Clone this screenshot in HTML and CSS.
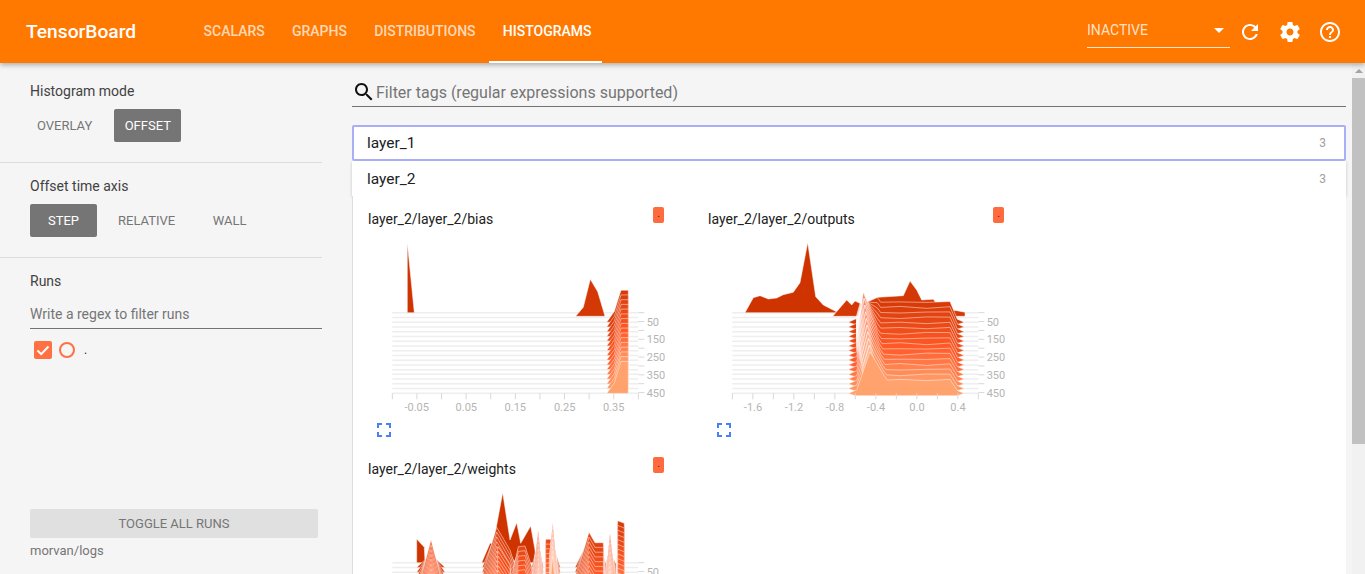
FILE: index.html
```html
<!DOCTYPE html>
<html lang="en">

<head>
    <meta charset="UTF-8">
    <meta name="viewport" content="width=device-width, initial-scale=1.0">
    <title>TensorBoard</title>
    <link rel="stylesheet" href="styles.css">
</head>

<body>
    <header class="topbar">
        <div class="brand">TensorBoard</div>
        <nav class="tabs">
            <a class="tab">Scalars</a>
            <a class="tab">Graphs</a>
            <a class="tab">Distributions</a>
            <a class="tab active">Histograms</a>
        </nav>
        <div class="run-select">
            <span>INACTIVE</span>
            <i class="caret"></i>
        </div>
        <div class="top-icons">
            <svg class="top-icon" viewBox="0 0 24 24"><path d="M17.65 6.35C16.2 4.9 14.21 4 12 4c-4.42 0-7.99 3.58-7.99 8s3.57 8 7.99 8c3.73 0 6.84-2.55 7.73-6h-2.08c-.82 2.33-3.04 4-5.65 4-3.31 0-6-2.69-6-6s2.69-6 6-6c1.66 0 3.14.69 4.22 1.78L13 11h7V4l-2.35 2.35z"/></svg>
            <svg class="top-icon" viewBox="0 0 24 24"><path d="M19.43 12.98c.04-.32.07-.64.07-.98s-.03-.66-.07-.98l2.11-1.65c.19-.15.24-.42.12-.64l-2-3.46c-.12-.22-.39-.3-.61-.22l-2.49 1c-.52-.4-1.08-.73-1.69-.98l-.38-2.65C14.46 2.18 14.25 2 14 2h-4c-.25 0-.46.18-.49.42l-.38 2.65c-.61.25-1.17.59-1.69.98l-2.49-1c-.23-.09-.49 0-.61.22l-2 3.46c-.13.22-.07.49.12.64l2.11 1.65c-.04.32-.07.65-.07.98s.03.66.07.98l-2.11 1.65c-.19.15-.24.42-.12.64l2 3.46c.12.22.39.3.61.22l2.49-1c.52.4 1.08.73 1.69.98l.38 2.65c.03.24.24.42.49.42h4c.25 0 .46-.18.49-.42l.38-2.65c.61-.25 1.17-.59 1.69-.98l2.49 1c.23.09.49 0 .61-.22l2-3.46c.12-.22.07-.49-.12-.64l-2.11-1.65zM12 15.5c-1.93 0-3.5-1.57-3.5-3.5s1.57-3.5 3.5-3.5 3.5 1.57 3.5 3.5-1.57 3.5-3.5 3.5z"/></svg>
            <svg class="top-icon" viewBox="0 0 24 24"><path d="M11 18h2v-2h-2v2zm1-16C6.48 2 2 6.48 2 12s4.48 10 10 10 10-4.48 10-10S17.52 2 12 2zm0 18c-4.41 0-8-3.59-8-8s3.59-8 8-8 8 3.59 8 8-3.59 8-8 8zm0-14c-2.21 0-4 1.79-4 4h2c0-1.1.9-2 2-2s2 .9 2 2c0 2-3 1.75-3 5h2c0-2.25 3-2.5 3-5 0-2.21-1.79-4-4-4z"/></svg>
        </div>
    </header>

    <div class="page">
        <aside class="sidebar">
            <section class="side-section mode">
                <h3 class="side-title">Histogram mode</h3>
                <div class="btn-row">
                    <button class="opt">OVERLAY</button>
                    <button class="opt on">OFFSET</button>
                </div>
            </section>
            <section class="side-section axis">
                <h3 class="side-title">Offset time axis</h3>
                <div class="btn-row">
                    <button class="opt on">STEP</button>
                    <button class="opt">RELATIVE</button>
                    <button class="opt">WALL</button>
                </div>
            </section>
            <section class="runs">
                <h3 class="side-title">Runs</h3>
                <div class="regex">Write a regex to filter runs</div>
                <div class="run-row">
                    <span class="check">
                        <svg viewBox="0 0 18 18"><path d="M3.5 9.5l3.7 3.6 7.3-7.6" /></svg>
                    </span>
                    <span class="radio"></span>
                    <span class="run-name">.</span>
                </div>
            </section>
            <div class="side-foot">
                <button class="toggle">TOGGLE ALL RUNS</button>
                <div class="logdir">morvan/logs</div>
            </div>
        </aside>

        <main class="content">
            <div class="filter">
                <svg class="search" viewBox="0 0 24 24"><path d="M15.5 14h-.79l-.28-.27C15.41 12.59 16 11.11 16 9.5 16 5.91 13.09 3 9.5 3S3 5.91 3 9.5 5.91 16 9.5 16c1.61 0 3.09-.59 4.23-1.57l.27.28v.79l5 4.99L20.49 19l-4.99-5zm-6 0C7.01 14 5 11.99 5 9.5S7.01 5 9.5 5 14 7.01 14 9.5 11.99 14 9.5 14z"/></svg>
                <span>Filter tags (regular expressions supported)</span>
            </div>
            <div class="category focused"><span>layer_1</span><span class="count">3</span></div>
            <div class="category"><span>layer_2</span><span class="count">3</span></div>
            <div class="cards">
                <div class="card">
                    <div class="card-head"><span class="card-title">layer_2/layer_2/bias</span><span class="pin">.</span></div>
                    <svg class="hist" id="bias"></svg>
                    <svg class="expand" viewBox="0 0 24 24"><path d="M7 14H5v5h5v-2H7v-3zm-2-4h2V7h3V5H5v5zm12 7h-3v2h5v-5h-2v3zM14 5v2h3v3h2V5h-5z"/></svg>
                </div>
                <div class="card">
                    <div class="card-head"><span class="card-title">layer_2/layer_2/outputs</span><span class="pin">.</span></div>
                    <svg class="hist" id="outputs"></svg>
                    <svg class="expand" viewBox="0 0 24 24"><path d="M7 14H5v5h5v-2H7v-3zm-2-4h2V7h3V5H5v5zm12 7h-3v2h5v-5h-2v3zM14 5v2h3v3h2V5h-5z"/></svg>
                </div>
                <div class="card">
                    <div class="card-head"><span class="card-title">layer_2/layer_2/weights</span><span class="pin">.</span></div>
                    <svg class="hist" id="weights"></svg>
                </div>
            </div>
        </main>

        <div class="scrollbar">
            <i class="scroll-up"></i>
            <div class="scroll-thumb"></div>
        </div>
    </div>

    <script src="chart.js"></script>
</body>

</html>
```

FILE: styles.css
```css
* {
    box-sizing: border-box;
}

html,
body {
    margin: 0;
    height: 100%;
    overflow: hidden;
}

body {
    display: flex;
    flex-direction: column;
    background-color: #f5f5f5;
    font-family: Roboto, "Liberation Sans", sans-serif;
    color: #212121;
}

/* top bar */
.topbar {
    position: relative;
    z-index: 2;
    display: flex;
    flex: none;
    align-items: center;
    height: 63px;
    margin-bottom: 1px;
    padding-left: 26px;
    background-color: #ff7800;
    box-shadow: 0 2px 5px rgba(0, 0, 0, 0.3);
    color: white;
}

.brand {
    width: 164px;
    font-size: 19.2px;
    font-weight: 500;
}

.tabs {
    display: flex;
    align-self: stretch;
}

.tab {
    display: flex;
    align-items: center;
    height: 63px;
    padding: 0 13.6px;
    border-bottom: 2px solid transparent;
    font-size: 14px;
    font-weight: 500;
    text-transform: uppercase;
    color: rgba(255, 255, 255, 0.72);
}

.tab.active {
    padding-right: 11px;
    border-bottom-color: white;
    color: white;
}

.run-select {
    display: flex;
    align-items: center;
    justify-content: space-between;
    width: 143px;
    height: 30px;
    margin-left: auto;
    margin-top: 2px;
    padding: 0 6px 4px 0;
    border-bottom: 1px solid rgba(255, 255, 255, 0.8);
    font-size: 14px;
    color: rgba(255, 255, 255, 0.8);
}

.caret {
    border-top: 5px solid white;
    border-left: 5px solid transparent;
    border-right: 5px solid transparent;
}

.top-icons {
    display: flex;
    gap: 16px;
    margin-left: 8px;
    margin-right: 23px;
}

.top-icon {
    width: 24px;
    height: 24px;
    fill: white;
}

/* layout under the bar */
.page {
    display: flex;
    flex: 1;
    min-height: 0;
}

.sidebar {
    display: flex;
    flex: none;
    flex-direction: column;
    width: 352px;
    padding-right: 30px;
}

.side-section {
    padding-left: 30px;
    border-bottom: 1px solid #dcdcdc;
}

.mode {
    height: 99px;
    padding-top: 18px;
}

.axis {
    height: 95px;
    padding-top: 14px;
}

.side-title {
    margin: 0;
    font-size: 14px;
    font-weight: 400;
    line-height: 18px;
    color: #424242;
}

.btn-row {
    display: flex;
    gap: 14px;
    margin-top: 9px;
}

.mode .btn-row {
    gap: 15px;
}

.opt {
    min-width: 67px;
    height: 33px;
    padding: 0 7px;
    border: none;
    border-radius: 2px;
    background: none;
    font-family: inherit;
    font-size: 13px;
    color: #757575;
}

.opt.on {
    background-color: #757575;
    color: white;
}

.runs {
    padding: 14px 0 0 30px;
}

.regex {
    height: 33px;
    margin-top: 6px;
    padding-top: 10px;
    border-bottom: 1px solid #737373;
    font-size: 14px;
    color: #757575;
}

.run-row {
    display: flex;
    align-items: center;
    margin-top: 12px;
    padding-left: 4px;
}

.check {
    width: 18px;
    height: 18px;
    border-radius: 2px;
    background-color: #ff7043;
}

.check svg {
    display: block;
    fill: none;
    stroke: white;
    stroke-width: 2;
}

.radio {
    width: 16px;
    height: 16px;
    margin-left: 7px;
    border: 2px solid #ff7043;
    border-radius: 50%;
}

.run-name {
    margin-left: 9px;
    font-size: 12px;
}

.side-foot {
    margin-top: auto;
    padding: 0 4px 15px 30px;
}

.toggle {
    width: 100%;
    height: 29px;
    border: none;
    border-radius: 2px;
    background-color: #e0e0e0;
    font-family: inherit;
    font-size: 13px;
    color: #757575;
}

.logdir {
    margin-top: 5px;
    font-size: 13px;
    line-height: 16px;
    color: #757575;
}

/* main column */
.content {
    display: flex;
    flex: 1;
    flex-direction: column;
    min-width: 0;
    margin-right: 6px;
}

.filter {
    display: flex;
    flex: none;
    align-items: center;
    height: 43px;
    padding-top: 14px;
    border-bottom: 1px solid #737373;
    font-size: 16px;
    color: #757575;
}

.search {
    width: 24px;
    height: 24px;
    fill: #111;
}

.category {
    display: flex;
    flex: none;
    align-items: center;
    justify-content: space-between;
    height: 35px;
    padding: 0 20px 0 15px;
    background-color: white;
    font-size: 15.5px;
    box-shadow: 0 1px 3px rgba(0, 0, 0, 0.2);
}

.category.focused {
    position: relative;
    z-index: 1;
    height: 36px;
    margin-top: 18px;
    border: 2px solid #a9aef8;
    border-radius: 2px;
    padding: 0 18px 0 13px;
    box-shadow: none;
}

.count {
    font-size: 12px;
    color: #a0a0a0;
}

.cards {
    display: flex;
    flex: 1;
    flex-wrap: wrap;
    align-content: flex-start;
    min-height: 0;
    overflow: hidden;
    border-left: 1px solid #dddddd;
    background-color: white;
}

.card {
    flex: none;
    width: 340px;
    height: 250px;
}

.card-head {
    display: flex;
    align-items: flex-start;
    justify-content: space-between;
    width: 311px;
    height: 39px;
    padding: 11px 0 0 15px;
}

.card-title {
    font-size: 14px;
    line-height: 24px;
}

.pin {
    width: 11px;
    height: 16px;
    border-radius: 2px;
    background-color: #ff6a3e;
    font-size: 10px;
    line-height: 14px;
    text-align: center;
}

.hist {
    display: block;
    width: 335px;
    height: 180px;
}

.expand {
    display: block;
    width: 24px;
    height: 24px;
    margin: 3px 0 0 19px;
    fill: #4a80f5;
}

/* chart parts, filled in by chart.js */
.row-line {
    stroke: #eeeeee;
    stroke-width: 1.5;
}

.row-shape {
    stroke: rgba(255, 255, 255, 0.6);
    stroke-width: 0.8;
}

.tick {
    stroke: #d8d8d8;
    stroke-width: 1;
}

.tick-label {
    font-size: 11px;
    fill: #b4b4b4;
}

/* scrollbar */
.scrollbar {
    flex: none;
    width: 13px;
    padding-top: 5px;
    background-color: #f1f1f1;
}

.scroll-up {
    display: block;
    width: 0;
    margin: 0 auto;
    border-bottom: 4px solid #a3a3a3;
    border-left: 4px solid transparent;
    border-right: 4px solid transparent;
}

.scroll-thumb {
    height: 366px;
    margin-top: 5px;
    background-color: #c1c1c1;
}
```

FILE: chart.js
```js
// Draws the offset histograms. Numbers are in "plot units", 3 units = 1px.
const ROWS = 18;
const BASE = 338;
const ROW_GAP = 14.24;
const NS = 'http://www.w3.org/2000/svg';

function baseline(i) {
    return BASE + i * ROW_GAP;
}

function mix(a, b, t) {
    return a.map((v, k) => Math.round(v + (b[k] - v) * t));
}

function rowColor(i) {
    let t = i / (ROWS - 1);
    let c = t < 0.6
        ? mix([207, 52, 0], [255, 90, 40], t / 0.6)
        : mix([255, 90, 40], [255, 162, 110], (t - 0.6) / 0.4);
    return `rgb(${c.join(',')})`;
}

function add(svg, tag, attrs, text) {
    let el = document.createElementNS(NS, tag);
    for (let k in attrs) {
        el.setAttribute(k, attrs[k]);
    }
    if (text) {
        el.textContent = text;
    }
    svg.appendChild(el);
}

function drawChart(id, cfg) {
    let svg = document.getElementById(id);
    let px = x => x / 3 + cfg.dx;
    let py = y => y / 3 - 35;

    for (let i = 0; i < ROWS; i++) {
        let y = py(baseline(i));
        add(svg, 'line', { class: 'row-line', x1: px(cfg.left), x2: px(cfg.right), y1: y, y2: y });
        cfg.shapes(i).forEach(points => {
            let d = points.map(p => `${px(p[0]).toFixed(1)},${py(p[1]).toFixed(1)}`).join(' ');
            // a tinted shape is a pale wash over the row before it
            let fill = points.tint ? 'rgba(255,255,255,0.3)' : rowColor(i);
            add(svg, 'polygon', { class: 'row-shape', points: d, fill: fill });
        });
    }

    // right axis
    for (let s = 0; s <= 450; s += 50) {
        let y = py(BASE + s * 0.533);
        add(svg, 'line', { class: 'tick', x1: px(cfg.right), x2: px(cfg.right + 18), y1: y, y2: y });
        if (s % 100 === 50) {
            add(svg, 'text', { class: 'tick-label', x: px(cfg.right + 25), y: y + 4 }, String(s));
        }
    }

    // bottom axis
    cfg.ticks.forEach(x => {
        add(svg, 'line', { class: 'tick', x1: px(x), x2: px(x), y1: py(580), y2: py(598) });
    });
    cfg.labels.forEach(l => {
        add(svg, 'text', { class: 'tick-label', x: px(l[0]), y: py(632), 'text-anchor': 'middle' }, l[1]);
    });
}

function range(start, step, count) {
    return Array.from({ length: count }, (_, i) => start + i * step);
}

drawChart('bias', {
    dx: 2,
    left: 112,
    right: 850,
    ticks: range(112, 73.8, 11),
    labels: [[185, '-0.05'], [334, '0.05'], [481, '0.15'], [629, '0.25'], [776, '0.35']],
    shapes(i) {
        if (i === 0) {
            return [[[157, 338], [157, 128], [178, 338]]];
        }
        if (i === 1) {
            return [[[662, 349], [685, 322], [706, 238], [728, 275], [750, 349]]];
        }
        let b = baseline(i);
        return [[[755, b], [778, b - 32], [798, b - 96], [820, b - 96], [820, b]]];
    }
});

drawChart('outputs', {
    dx: 7,
    left: 97,
    right: 835,
    ticks: range(97, 61.5, 13),
    labels: [[159, '-1.6'], [282, '-1.2'], [405, '-0.8'], [528, '-0.4'], [651, '0.0'], [774, '0.4']],
    shapes(i) {
        if (i === 0) {
            return [[[135, 338], [160, 293], [180, 287], [205, 297], [230, 294], [250, 284], [280, 277],
                [300, 248], [323, 128], [347, 290], [370, 315], [415, 338]]];
        }
        if (i === 1) {
            return [[[398, 349], [440, 300], [455, 315], [465, 303], [480, 310], [505, 310], [535, 292],
                [610, 287], [630, 243], [650, 270], [665, 300], [700, 298], [720, 325], [770, 332],
                [795, 337], [795, 349]]];
        }
        let b = baseline(i);
        // the peak reaches highest around row 8, later rows slide down to the front
        let late = Math.max(0, (i - 8) / (ROWS - 9));
        let peakX = 490 + 20 * late;
        let tip = i <= 8 ? 275 + (8 - i) * 6 : 275 + 180 * late;
        let t = (i - 2) / (ROWS - 3);
        let flat = 60 - 20 * t;
        let wob = Math.sin(i * 1.7) * 3;
        let body = [[445, b], [465, b - 9], [470, b - 10], [peakX, tip], [peakX + 42, b - flat - 14],
            [peakX + 52, b - flat], [600, b - flat + wob], [680, b - flat - wob], [750, b - flat - 2],
            [772, b - 9], [793, b], [772, b + 7], [465, b + 7]];
        if (i === ROWS - 1) {
            return [body];
        }
        let wash = [[peakX - 20, tip + 70], [peakX, tip], [peakX + 30, tip + 90], [peakX + 30, b], [peakX - 20, b]];
        wash.tint = true;
        return [body, wash];
    }
});

const WEIGHT_PEAKS = [
    { r: 7, pts: [[185], [228, 270], [270]] },
    { r: 3, pts: [[382], [425, 232], [465, 300], [490]] },
    { r: 7, pts: [[395], [430, 290], [465, 345], [470]] },
    { r: 5, pts: [[465], [490, 290], [510, 288], [530, 350], [532]] },
    { r: 6, pts: [[530], [550, 240], [565]] },
    { r: 6, pts: [[570], [572, 268], [595, 268], [597]] },
    { r: 10, pts: [[570], [593, 218], [616]] },
    { r: 4, pts: [[660], [702, 247], [720, 278], [745, 278], [750]] },
    { r: 9, pts: [[745], [765, 250], [788]] },
    { r: 2, pts: [[785], [788, 212], [808, 220], [808]] }
];

drawChart('weights', {
    dx: 2,
    left: 112,
    right: 850,
    ticks: [],
    labels: [],
    shapes(i) {
        if (i === 0) {
            return [
                [[185, 338], [185, 267], [208, 292], [210, 338]],
                [[380, 338], [405, 280], [415, 280], [443, 128], [465, 270], [485, 218], [497, 280],
                    [527, 228], [540, 300], [540, 338]]
            ];
        }
        let b = baseline(i);
        return WEIGHT_PEAKS.map(c => c.pts.map(p => {
            if (p.length === 1) {
                return [p[0], b];
            }
            // rows behind the peak row drop away slower than the rows in front of it
            let drop = (i - c.r) * ROW_GAP * (i < c.r ? -0.5 : 1);
            return [p[0], Math.min(b, p[1] + drop)];
        }));
    }
});
```
